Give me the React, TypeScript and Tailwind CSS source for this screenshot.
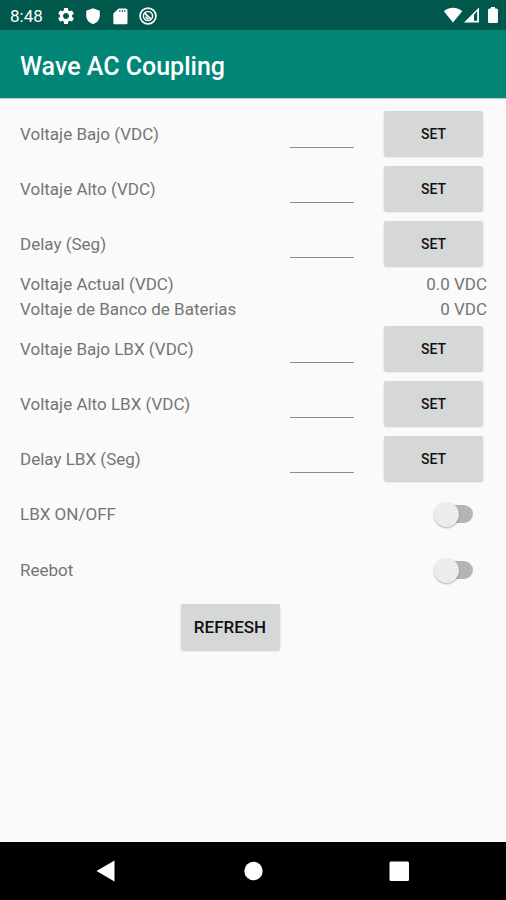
import { useId } from "react";

function StatusBar() {
  return (
    <div className="flex h-[30px] items-center justify-between bg-[#00574b] pr-2 pl-2.5 text-white">
      <div className="flex items-center pt-px">
        <span className="w-[46px] text-[17px] leading-5">8:48</span>
        <div className="flex items-center gap-2">
          <svg className="size-5" viewBox="0 0 24 24" fill="currentColor" aria-hidden="true">
            <path d="M19.14 12.94c.04-.3.06-.61.06-.94 0-.32-.02-.64-.07-.94l2.03-1.58c.18-.14.23-.41.12-.61l-1.92-3.32c-.12-.22-.37-.29-.59-.22l-2.39.96c-.5-.38-1.03-.7-1.62-.94l-.36-2.54c-.04-.24-.24-.41-.48-.41h-3.84c-.24 0-.43.17-.47.41l-.36 2.54c-.59.24-1.13.57-1.62.94l-2.39-.96c-.22-.08-.47 0-.59.22L2.74 8.87c-.12.21-.08.47.12.61l2.03 1.58c-.05.3-.09.63-.09.94s.02.64.07.94l-2.03 1.58c-.18.14-.23.41-.12.61l1.92 3.32c.12.22.37.29.59.22l2.39-.96c.5.38 1.03.7 1.62.94l.36 2.54c.05.24.24.41.48.41h3.84c.24 0 .44-.17.47-.41l.36-2.54c.59-.24 1.13-.56 1.62-.94l2.39.96c.22.08.47 0 .59-.22l1.92-3.32c.12-.22.07-.47-.12-.61l-2.01-1.58zM12 15.6c-1.98 0-3.6-1.62-3.6-3.6s1.62-3.6 3.6-3.6 3.6 1.62 3.6 3.6-1.62 3.6-3.6 3.6z" />
          </svg>
          <svg className="size-[18px]" viewBox="0 0 24 24" fill="currentColor" aria-hidden="true">
            <path d="M12 1.500L3 5v6.500c0 5.300 3.700 9.700 9 11 5.300-1.300 9-5.700 9-11V5z" />
          </svg>
          <svg className="size-5" viewBox="0 0 24 24" fill="currentColor" aria-hidden="true">
            <path d="M19 3h-8.500L4 9v11c0 1.100.9 2 2 2h13c1.100 0 2-.9 2-2V5c0-1.100-.9-2-2-2zM12.500 7H11V5h1.500zM15.500 7H14V5h1.500zM18.500 7H17V5h1.500z" />
          </svg>
          <svg className="size-5" viewBox="0 0 24 24" fill="none" stroke="currentColor" aria-hidden="true">
            <circle cx="12" cy="12" r="9.500" strokeWidth="2" />
            <circle cx="12" cy="12" r="5.500" strokeWidth="1.800" />
            <path d="M8 8.500l8 7.500M9 13l3.500 3" strokeWidth="2" />
          </svg>
        </div>
      </div>
      <div className="flex items-center">
        <svg className="h-4 w-5" viewBox="0 0 20 16" fill="currentColor" aria-hidden="true">
          <path d="M10 15.500L.8 4.200C3.300 2 6.500.8 10 .8s6.700 1.200 9.200 3.400z" />
        </svg>
        <svg className="h-4 w-[17px]" viewBox="0 0 17 16" aria-hidden="true">
          <path d="M16 .5V15.500H1z" fill="currentColor" />
          <path d="M11 7.500l3.200-3.200v9.500H11z" fill="#00574b" />
        </svg>
        <svg className="ml-2 h-[18px] w-2.5" viewBox="0 0 10 18" fill="currentColor" aria-hidden="true">
          <path d="M3 1h4v1.500h1.500q1.500 0 1.500 1.500v11.500q0 1.500-1.500 1.500h-7q-1.500 0-1.500-1.500V4q0-1.500 1.500-1.500H3z" />
        </svg>
      </div>
    </div>
  );
}

const buttonStyle =
  "w-[99px] rounded-[2px] bg-[#d6d7d7] text-[#111] shadow-[0_1px_2px_rgba(0,0,0,0.2)]";

function SettingRow({ label }: { label: string }) {
  const id = useId();
  return (
    <div className="flex h-[55px] items-center pr-[23px]">
      <label htmlFor={id} className="flex-1">
        {label}
      </label>
      <input
        id={id}
        type="text"
        inputMode="decimal"
        className="h-[29px] w-16 border-b border-[#8c8c8c] bg-transparent outline-none"
      />
      <button type="button" className={`${buttonStyle} ml-[30px] h-[45px] text-sm font-medium`}>
        SET
      </button>
    </div>
  );
}

function ValueRow({ label, value }: { label: string; value: string }) {
  return (
    <div className="flex h-[25px] items-center justify-between pr-[19px]">
      <span>{label}</span>
      <span>{value}</span>
    </div>
  );
}

function SwitchRow({ label }: { label: string }) {
  const id = useId();
  return (
    <div className="flex h-14 items-center justify-between pr-[33px]">
      <label htmlFor={id}>{label}</label>
      <input
        id={id}
        type="checkbox"
        role="switch"
        className="flex h-[18px] w-[35px] appearance-none items-center rounded-full bg-[#b5b5b5] before:-ml-1 before:size-[25px] before:shrink-0 before:rounded-full before:bg-[#ececec] before:shadow-[0_1px_2px_rgba(0,0,0,0.3)] checked:bg-[#80c2bb] checked:before:ml-4"
      />
    </div>
  );
}

export default function App() {
  return (
    <div className="flex min-h-screen flex-col bg-[#fafafa] font-[Roboto,sans-serif]">
      <StatusBar />
      <header className="flex h-[68px] items-center bg-[#008577] px-5 pt-1.5 shadow-[0_1px_1px_rgba(0,0,0,0.2)]">
        <h1 className="text-[25px] leading-8 font-medium text-white">Wave AC Coupling</h1>
      </header>
      <main className="flex-1 pt-2 pl-5 text-[17px] leading-6 text-[#757575]">
        <SettingRow label="Voltaje Bajo (VDC)" />
        <SettingRow label="Voltaje Alto (VDC)" />
        <SettingRow label="Delay (Seg)" />
        <ValueRow label="Voltaje Actual (VDC)" value="0.0 VDC" />
        <ValueRow label="Voltaje de Banco de Baterias" value="0 VDC" />
        <SettingRow label="Voltaje Bajo LBX (VDC)" />
        <SettingRow label="Voltaje Alto LBX (VDC)" />
        <SettingRow label="Delay LBX (Seg)" />
        <SwitchRow label="LBX ON/OFF" />
        <SwitchRow label="Reebot" />
        <div className="flex justify-center pt-1.5 pr-[66px]">
          <button type="button" className={`${buttonStyle} h-[46px] text-[17px] font-medium`}>
            REFRESH
          </button>
        </div>
      </main>
      <nav aria-label="System" className="flex h-[58px] items-center justify-between bg-black px-[94px] text-white">
        <button type="button" aria-label="Back">
          <svg className="size-6" viewBox="0 0 24 24" fill="currentColor" aria-hidden="true">
            <path d="M2.500 12L20.500 1.500v21z" />
          </svg>
        </button>
        <button type="button" aria-label="Home">
          <svg className="size-6" viewBox="0 0 24 24" fill="currentColor" aria-hidden="true">
            <circle cx="12.500" cy="12" r="9.200" />
          </svg>
        </button>
        <button type="button" aria-label="Recent apps">
          <svg className="size-6" viewBox="0 0 24 24" fill="currentColor" aria-hidden="true">
            <rect x="1.500" y="2.500" width="19.500" height="19.500" rx="1.500" />
          </svg>
        </button>
      </nav>
    </div>
  );
}
